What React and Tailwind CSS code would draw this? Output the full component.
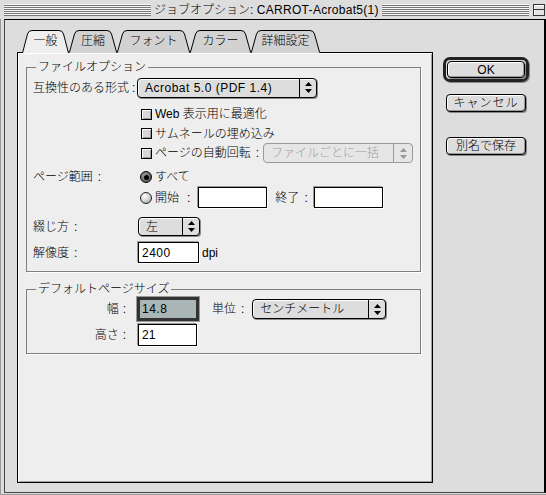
import React from "react";

// Mac OS 8 "Platinum" style job options dialog

const tabs = [
  { label: "一般", w: 47, active: true },
  { label: "圧縮", w: 48 },
  { label: "フォント", w: 73 },
  { label: "カラー", w: 61 },
  { label: "詳細設定", w: 69 },
];

const Tab = ({ label, w, active }) => {
  const edge = `M0.5 23 L5.5 4 Q6.5 0.5 10 0.5 L${w - 10} 0.5 Q${w - 6.5} 0.5 ${w - 5.5} 4 L${w - 0.5} 23`;
  return (
    <div className="relative flex h-[23px] items-center justify-center" style={{ width: w }}>
      <svg className="absolute inset-0" width={w} height={23}>
        <path d={edge + " Z"} fill={active ? "#eeeeee" : "#d2d2d2"} />
        {active && <path d="M6.5 5 Q7.5 1.5 10 1.5" fill="none" stroke="#fff" />}
        <path d={active ? edge : edge.replace(/23/g, "22")} fill="none" stroke="#000" />
      </svg>
      <span className="relative pb-[1px] text-[12px] leading-none">{label}</span>
    </div>
  );
};

const Arrows = ({ color = "#000" }) => (
  <svg width="7" height="11" viewBox="0 0 7 11">
    <path d="M3.5 0 L7 4 H0 Z M0 7 H7 L3.5 11 Z" fill={color} />
  </svg>
);

const Popup = ({ value, className }) => (
  <div
    className={
      "flex items-stretch rounded-[4px] border border-black bg-[#dddddd] shadow-[inset_1px_1px_0_#fff,1px_1px_0_#8a8a8a] " +
      className
    }
  >
    <div className="flex flex-1 items-center pl-[7px] text-[12px] leading-none">{value}</div>
    <div className="flex w-[17px] items-center justify-center border-l border-black">
      <Arrows />
    </div>
  </div>
);

const PopupDisabled = ({ value, className }) => (
  <div
    className={
      "flex items-stretch rounded-[4px] border border-[#9a9a9a] bg-[#e6e6e6] text-[#9a9a9a] " + className
    }
  >
    <div className="flex flex-1 items-center pl-[7px] text-[12px] leading-none">{value}</div>
    <div className="flex w-[19px] items-center justify-center border-l border-[#9a9a9a]">
      <Arrows color="#999" />
    </div>
  </div>
);

const Checkbox = () => (
  <span className="ml-[4px] h-[11px] w-[11px] shrink-0 border border-black bg-[#d6d6d6] shadow-[inset_1px_1px_0_#fff,inset_-1px_-1px_0_#9a9a9a]" />
);

const Radio = ({ on }) =>
  on ? (
    <span className="ml-[3px] flex h-[12px] w-[12px] shrink-0 items-center justify-center rounded-full border border-black bg-[radial-gradient(circle_at_35%_35%,#9a9a9a,#4a4a4a)]">
      <span className="h-[5px] w-[5px] rounded-full bg-black" />
    </span>
  ) : (
    <span className="ml-[3px] h-[12px] w-[12px] shrink-0 rounded-full border border-[#222] bg-[radial-gradient(circle_at_35%_30%,#ffffff,#d0d0d0_55%,#8c8c8c)]" />
  );

const Field = ({ value, className }) => (
  <div
    className={
      "flex items-center border border-black bg-white pl-[3px] text-[12px] leading-none shadow-[1px_1px_0_#fff,-1px_-1px_0_#9a9a9a] " +
      className
    }
  >
    {value}
  </div>
);

const Label = ({ text, gap = "ml-[5px]" }) => (
  <span className="w-[104px] shrink-0 text-[12px] leading-none">
    {text}
    <span className={gap}>:</span>
  </span>
);

const Group = ({ title, className, children }) => (
  <div className={"relative ml-[8px] w-[395px] border border-[#7f7f7f] shadow-[1px_1px_0_#fff] " + className}>
    <span className="absolute left-[9px] top-[-8px] bg-[#eeeeee] px-[2px] text-[12px] leading-[14px]">{title}</span>
    {children}
  </div>
);

const Button = ({ children, className }) => (
  <div
    className={
      "flex items-center justify-center rounded-[4px] border border-black bg-[#dddddd] text-[12px] leading-none shadow-[inset_1px_1px_0_#fff,inset_-1px_-1px_0_#999,1px_1px_0_#888] " +
      className
    }
  >
    {children}
  </div>
);

const Stripes = () => (
  <div className="h-[12px] flex-1 bg-[repeating-linear-gradient(to_bottom,#f6f6f6_0px,#f6f6f6_1px,#777777_1px,#777777_2px)]" />
);

export default function App() {
  return (
    <div className="h-[495px] w-[546px] overflow-hidden bg-[#dddddd] font-['Liberation_Sans','Noto_Sans_CJK_JP',sans-serif] font-light text-black">
      {/* title bar */}
      <div className="flex h-[19px] items-center pl-[4px] pr-[1px]">
        <Stripes />
        <span className="px-[3px] text-[12px] leading-none">
          ジョブオプション: <span className="tracking-[0.3px]">CARROT-Acrobat5(1)</span>
        </span>
        <Stripes />
        <div className="ml-[4px] flex h-[12px] w-[12px] flex-col justify-center border border-[#333] bg-[#e4e4e4] shadow-[inset_1px_1px_0_#fff]">
          <div className="h-[1px] bg-[#333]" />
        </div>
      </div>

      {/* window body */}
      <div className="h-[476px] border-b border-l border-[#999] pb-[1px] pl-[3px]">
        <div className="flex h-full border-b border-l border-t border-[#444] border-t-black border-r-2 border-r-black pl-[12px] pt-[10px]">
          {/* left: tabs + panel */}
          <div className="flex w-[416px] flex-col">
            <div className="relative z-10 -mb-[1px] flex pl-[5px]">
              {tabs.map((t) => (
                <Tab key={t.label} {...t} />
              ))}
            </div>
            <div className="h-[431px] border border-black bg-[#eeeeee] pt-[14px] shadow-[inset_1px_1px_0_#fff,inset_-1px_-1px_0_#a0a0a0]">
              <Group title="ファイルオプション" className="h-[205px] pt-[9px]">
                <div className="flex h-[21px] items-center pl-[6px]">
                  <Label text="互換性のある形式" gap="ml-[3px]" />
                  <Popup
                    value={<span className="tracking-[0.5px]">Acrobat 5.0 (PDF 1.4)</span>}
                    className="h-[20px] w-[180px]"
                  />
                </div>
                <div className="mt-[6px] flex h-[20px] items-center pl-[110px] text-[12px] leading-none">
                  <Checkbox />
                  <span className="ml-[3px]">Web 表示用に最適化</span>
                </div>
                <div className="flex h-[19px] items-center pl-[110px] text-[12px] leading-none">
                  <Checkbox />
                  <span className="ml-[3px]">サムネールの埋め込み</span>
                </div>
                <div className="flex h-[20px] items-center pl-[110px] text-[12px] leading-none">
                  <Checkbox />
                  <span className="ml-[3px]">ページの自動回転</span>
                  <span className="ml-[5px]">:</span>
                  <PopupDisabled value="ファイルごとに一括" className="ml-[4px] h-[20px] w-[150px]" />
                </div>
                <div className="mt-[4px] flex h-[20px] items-center pl-[6px] text-[12px] leading-none">
                  <Label text="ページ範囲" />
                  <Radio on />
                  <span className="ml-[3px]">すべて</span>
                </div>
                <div className="flex h-[21px] items-center pl-[110px] text-[12px] leading-none">
                  <Radio />
                  <span className="ml-[3px]">開始</span>
                  <span className="ml-[8px]">:</span>
                  <Field value="" className="ml-[8px] h-[21px] w-[69px]" />
                  <span className="ml-[8px]">終了</span>
                  <span className="ml-[5px]">:</span>
                  <Field value="" className="ml-[6px] h-[21px] w-[69px]" />
                </div>
                <div className="mt-[9px] flex h-[19px] items-center pl-[6px]">
                  <Label text="綴じ方" />
                  <Popup value="左" className="ml-[1px] h-[19px] w-[62px]" />
                </div>
                <div className="mt-[6px] flex h-[21px] items-center pl-[6px] text-[12px] leading-none">
                  <Label text="解像度" />
                  <Field value="2400" className="ml-[1px] h-[21px] w-[61px] tracking-[0.5px]" />
                  <span className="ml-[3px]">dpi</span>
                </div>
              </Group>

              <Group title="デフォルトページサイズ" className="mt-[17px] h-[65px] pt-[7px]">
                <div className="flex h-[24px] items-center pl-[6px] text-[12px] leading-none">
                  <span className="w-[104px] shrink-0 pr-[11px] text-right">
                    幅<span className="ml-[4px]">:</span>
                  </span>
                  <div className="flex h-[24px] w-[62px] items-center border-[3px] border-[#333] bg-[#a9b6b5] pl-[2px] tracking-[0.5px] shadow-[0_0_0_1px_#9a9a9a]">
                    14.8
                  </div>
                  <span className="ml-[13px]">単位</span>
                  <span className="ml-[5px]">:</span>
                  <Popup value="センチメートル" className="ml-[8px] h-[20px] w-[134px]" />
                </div>
                <div className="mt-[3px] flex h-[22px] items-center pl-[6px] text-[12px] leading-none">
                  <span className="w-[104px] shrink-0 pr-[11px] text-right">
                    高さ<span className="ml-[4px]">:</span>
                  </span>
                  <Field value="21" className="ml-[1px] h-[22px] w-[59px]" />
                </div>
              </Group>
            </div>
          </div>

          {/* right: buttons */}
          <div className="ml-[10px] mt-[27px] flex w-[86px] flex-col items-center">
            <div className="h-[25px] w-[86px] rounded-[7px] border-[3px] border-[#222] p-[1px] shadow-[1px_1px_0_#888]">
              <Button className="h-full w-full">OK</Button>
            </div>
            <Button className="mt-[12px] h-[18px] w-[80px] tracking-[1px]">キャンセル</Button>
            <Button className="mt-[25px] h-[18px] w-[80px]">別名で保存</Button>
          </div>
        </div>
      </div>
    </div>
  );
}
